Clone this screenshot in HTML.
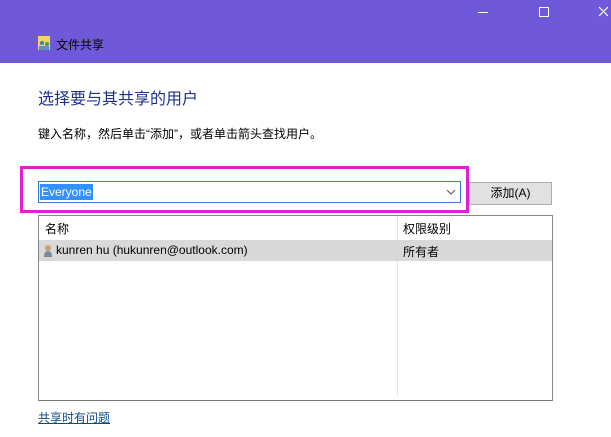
<!DOCTYPE html>
<html><head><meta charset="utf-8"><style>
*{margin:0;padding:0;box-sizing:border-box}
body{width:611px;height:437px;background:#fff;font-family:"Liberation Sans","Noto Sans CJK SC",sans-serif;position:relative;overflow:hidden;font-size:12px;color:#000}
.tb{position:absolute;left:0;top:0;width:611px;height:63px;background:#7059d8}
.a{position:absolute}
</style></head><body>
<div class="tb"></div>
<div class="a" style="left:478px;top:12px;width:10px;height:1px;background:#fff"></div>
<div class="a" style="left:539px;top:7px;width:10px;height:10px;border:1px solid #fff"></div>
<svg class="a" style="left:498px;top:4px" width="110" height="16"><path d="M101 3l9 9M110 3l-9 9" stroke="#fff" stroke-width="1.2"/></svg>
<svg class="a" style="left:37px;top:35px" width="14" height="16"><rect x="1" y="1" width="12" height="14" fill="#f2d36b"/><circle cx="5" cy="8" r="2" fill="#3a7bd5"/><circle cx="10" cy="9" r="2" fill="#4aa04a"/><rect x="2" y="11" width="10" height="4" fill="#5b8fd0"/></svg>
<div class="a" style="left:56px;top:36px;font-size:12px;color:#000">文件共享</div>
<div class="a" style="left:38px;top:85px;font-size:16px;color:#1e3287">选择要与其共享的用户</div>
<div class="a" style="left:38px;top:125px;font-size:12px">键入名称，然后单击“添加”，或者单击箭头查找用户。</div>
<div class="a" style="left:20px;top:166px;width:449px;height:47px;border:3px solid #e020d0"></div>
<div class="a" style="left:38px;top:181px;width:423px;height:22px;border:1px solid #3a78c8;background:#fff"></div>
<div class="a" style="left:40px;top:184px;height:16px;padding:0 1px;background:#3390ff;color:#fff;font-size:12px;line-height:16px">Everyone</div>
<svg class="a" style="left:446px;top:189px" width="10" height="6"><path d="M1 1l4 4 4-4" stroke="#555" fill="none"/></svg>
<div class="a" style="left:469px;top:182px;width:83px;height:23px;border:1px solid #adadad;background:#e1e1e1;text-align:center;line-height:21px">添加(A)</div>
<div class="a" style="left:38px;top:215px;width:515px;height:186px;border:1px solid #828790;border-bottom-color:#777;background:#fff"></div>
<div class="a" style="left:397px;top:216px;width:1px;height:180px;background:#e6e6e6"></div>
<div class="a" style="left:45px;top:220px">名称</div>
<div class="a" style="left:403px;top:220px">权限级别</div>
<div class="a" style="left:39px;top:240px;width:513px;height:21px;background:#d9d9d9"></div>
<svg class="a" style="left:43px;top:243px" width="10" height="15"><circle cx="5" cy="5" r="3" fill="#c9a070"/><path d="M1 14q0-6 4-6t4 6z" fill="#7a8a9a"/></svg>
<div class="a" style="left:56px;top:243px">kunren hu (hukunren@outlook.com)</div>
<div class="a" style="left:403px;top:243px">所有者</div>
<div class="a" style="left:38px;top:409px;color:#0a4a86;text-decoration:underline">共享时有问题</div>
</body></html>
